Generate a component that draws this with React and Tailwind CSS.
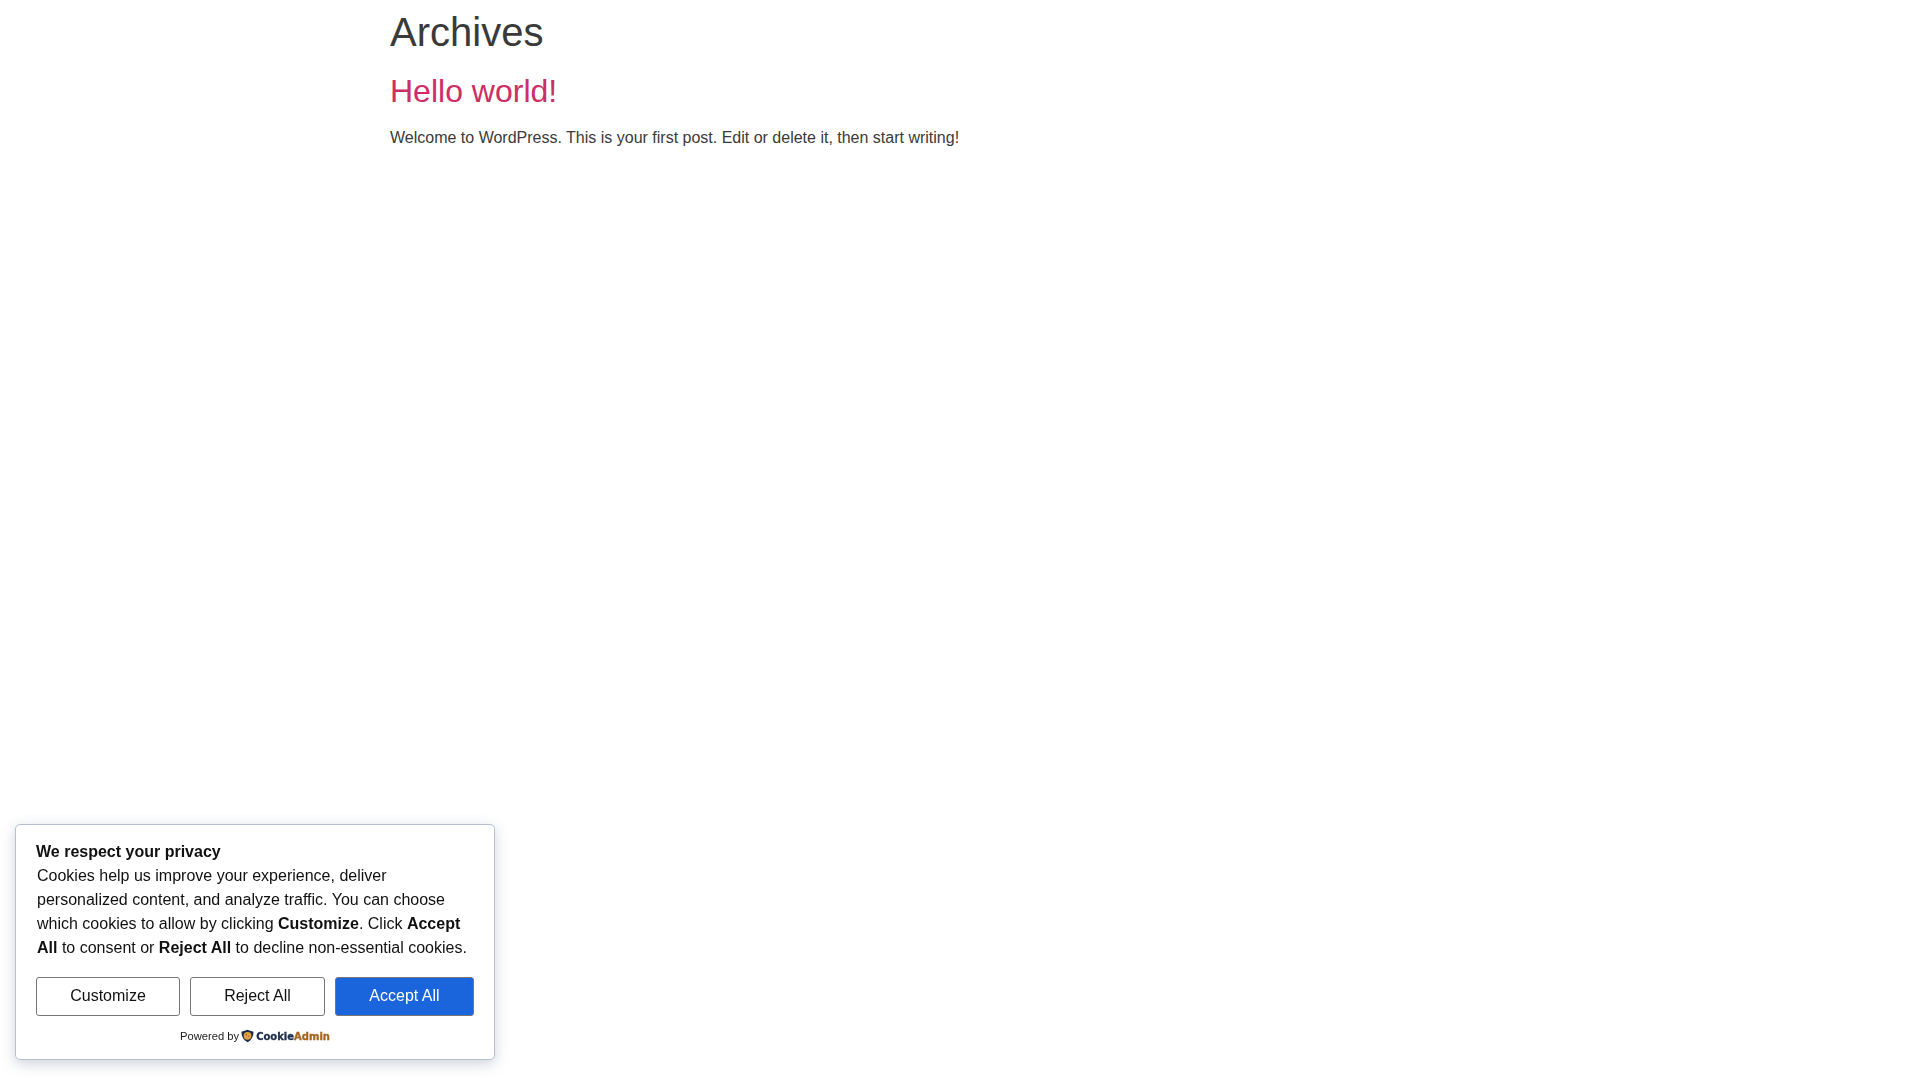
export default function App() {
  return (
    <div className="min-h-screen bg-white font-['Liberation_Sans',Arial,sans-serif] text-[#3a3a3a]">
      <main className="w-[1140px] mx-auto">
        <h1 className="text-[40px] leading-[48px] font-normal h-[56px] pt-2 mb-2">Archives</h1>
        <h2 className="text-[32px] leading-[38px] font-normal mb-3 pt-2">
          <a href="#" className="text-[#cc2e66]">Hello world!</a>
        </h2>
        <p className="text-base leading-6 pt-1">Welcome to WordPress. This is your first post. Edit or delete it, then start writing!</p>
      </main>

      <div className="fixed left-[15px] bottom-[20px] w-[480px] h-[236px] bg-white border border-[#b4c0d0] rounded-[5px] shadow-[0_4px_14px_rgba(90,110,140,0.3)] pt-[15px] px-[20px] text-[#111]">
        <div className="text-base leading-6 font-bold">We respect your privacy</div>
        <p className="text-base leading-6 pl-px">
          Cookies help us improve your experience, deliver personalized content, and analyze traffic. You can choose which cookies to allow by clicking <b>Customize</b>. Click <b>Accept All</b> to consent or <b>Reject All</b> to decline non-essential cookies.
        </p>
        <div className="flex gap-[10px] mt-[17px]">
          <button className="w-[144px] h-[39px] pb-px bg-white border border-[#767676] rounded-[3px] text-base text-[#111]">Customize</button>
          <button className="w-[135px] h-[39px] pb-px bg-white border border-[#767676] rounded-[3px] text-base text-[#111]">Reject All</button>
          <button className="w-[139px] h-[39px] pb-px bg-[#1a64dc] border border-[#767676] rounded-[3px] text-base text-white">Accept All</button>
        </div>
        <div className="flex justify-center items-center gap-[2px] mt-[10px] h-[20px] text-[11.2px] text-[#222]">
          <span>Powered by</span>
          <svg width="13" height="14" viewBox="0 0 14 14">
            <path d="M7 .4 L13.4 2.4 C13.6 7.6 11.2 11.6 7 13.6 C2.8 11.6 .4 7.6 .6 2.4 Z" fill="#1b2c4b" />
            <circle cx="7" cy="6.8" r="4.2" fill="#e3a03c" />
            <circle cx="5.8" cy="5.6" r=".7" fill="#8a5a1c" />
            <circle cx="8.4" cy="7.4" r=".7" fill="#8a5a1c" />
          </svg>
          <span className="font-['DejaVu_Sans',sans-serif] font-bold text-[10px] leading-none mt-px [-webkit-text-stroke:0.3px]">
            <span className="text-[#1b2c4b]">Cookie</span>
            <span className="text-[#a5641f]">Admin</span>
          </span>
        </div>
      </div>
    </div>
  );
}
